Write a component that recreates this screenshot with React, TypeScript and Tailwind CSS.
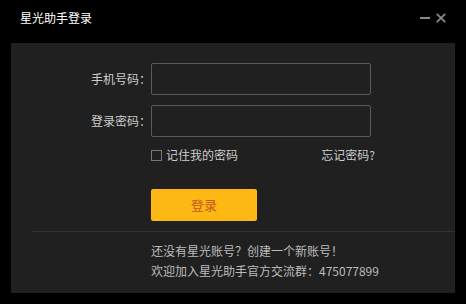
import React from "react";

export default function App() {
  const font = { fontFamily: '"Noto Sans CJK SC", "Noto Sans", sans-serif' };
  return (
    <div className="w-[466px] h-[304px] bg-black flex flex-col overflow-hidden" style={font}>
      <div className="h-[43px] flex items-start pl-[20px] pr-[20px]">
        <div className="pt-[10px] text-[12px] leading-[16px] text-white">星光助手登录</div>
        <div className="ml-auto flex items-start pt-[13px] gap-[6px]">
          <svg width="10" height="10" viewBox="0 0 10 10">
            <rect x="0" y="4" width="10" height="2" fill="#8a8a8a" />
          </svg>
          <svg width="10" height="10" viewBox="0 0 10 10">
            <path d="M0.8 0.8 L9.2 9.2 M9.2 0.8 L0.8 9.2" stroke="#8a8a8a" strokeWidth="1.8" />
          </svg>
        </div>
      </div>
      <div className="ml-[11px] w-[444px] h-[250px] bg-[#202020] flex flex-col pt-[20px]">
        <div className="flex items-center">
          <div className="w-[140px] text-right text-[12px] text-[#cccccc]">手机号码：</div>
          <input className="w-[220px] h-[32px] border border-[#5a5a5a] rounded-[2px] bg-transparent outline-none" />
        </div>
        <div className="flex items-center mt-[10px]">
          <div className="w-[140px] text-right text-[12px] text-[#cccccc]">登录密码：</div>
          <input type="password" className="w-[220px] h-[32px] border border-[#5a5a5a] rounded-[2px] bg-transparent outline-none" />
        </div>
        <div className="ml-[140px] w-[224px] h-[16px] mt-[10px] flex items-center justify-between text-[12px] leading-[16px] text-[#cccccc]">
          <div className="flex items-center gap-[4px]">
            <div className="w-[11px] h-[11px] border border-[#777777]" />
            <span>记住我的密码</span>
          </div>
          <span>忘记密码?</span>
        </div>
        <button className="ml-[140px] mt-[26px] w-[106px] h-[32px] rounded-[2px] bg-[#fdb813] text-[#c0561a] text-[13px] flex items-center justify-center">
          登录
        </button>
        <div className="ml-[21px] mt-[10px] h-px bg-[#333333]" />
        <div className="ml-[140px] mt-[9px] text-[12px] leading-[20px] text-[#bbbbbb]">
          <div>还没有星光账号？创建一个新账号！</div>
          <div>欢迎加入星光助手官方交流群：475077899</div>
        </div>
      </div>
    </div>
  );
}
